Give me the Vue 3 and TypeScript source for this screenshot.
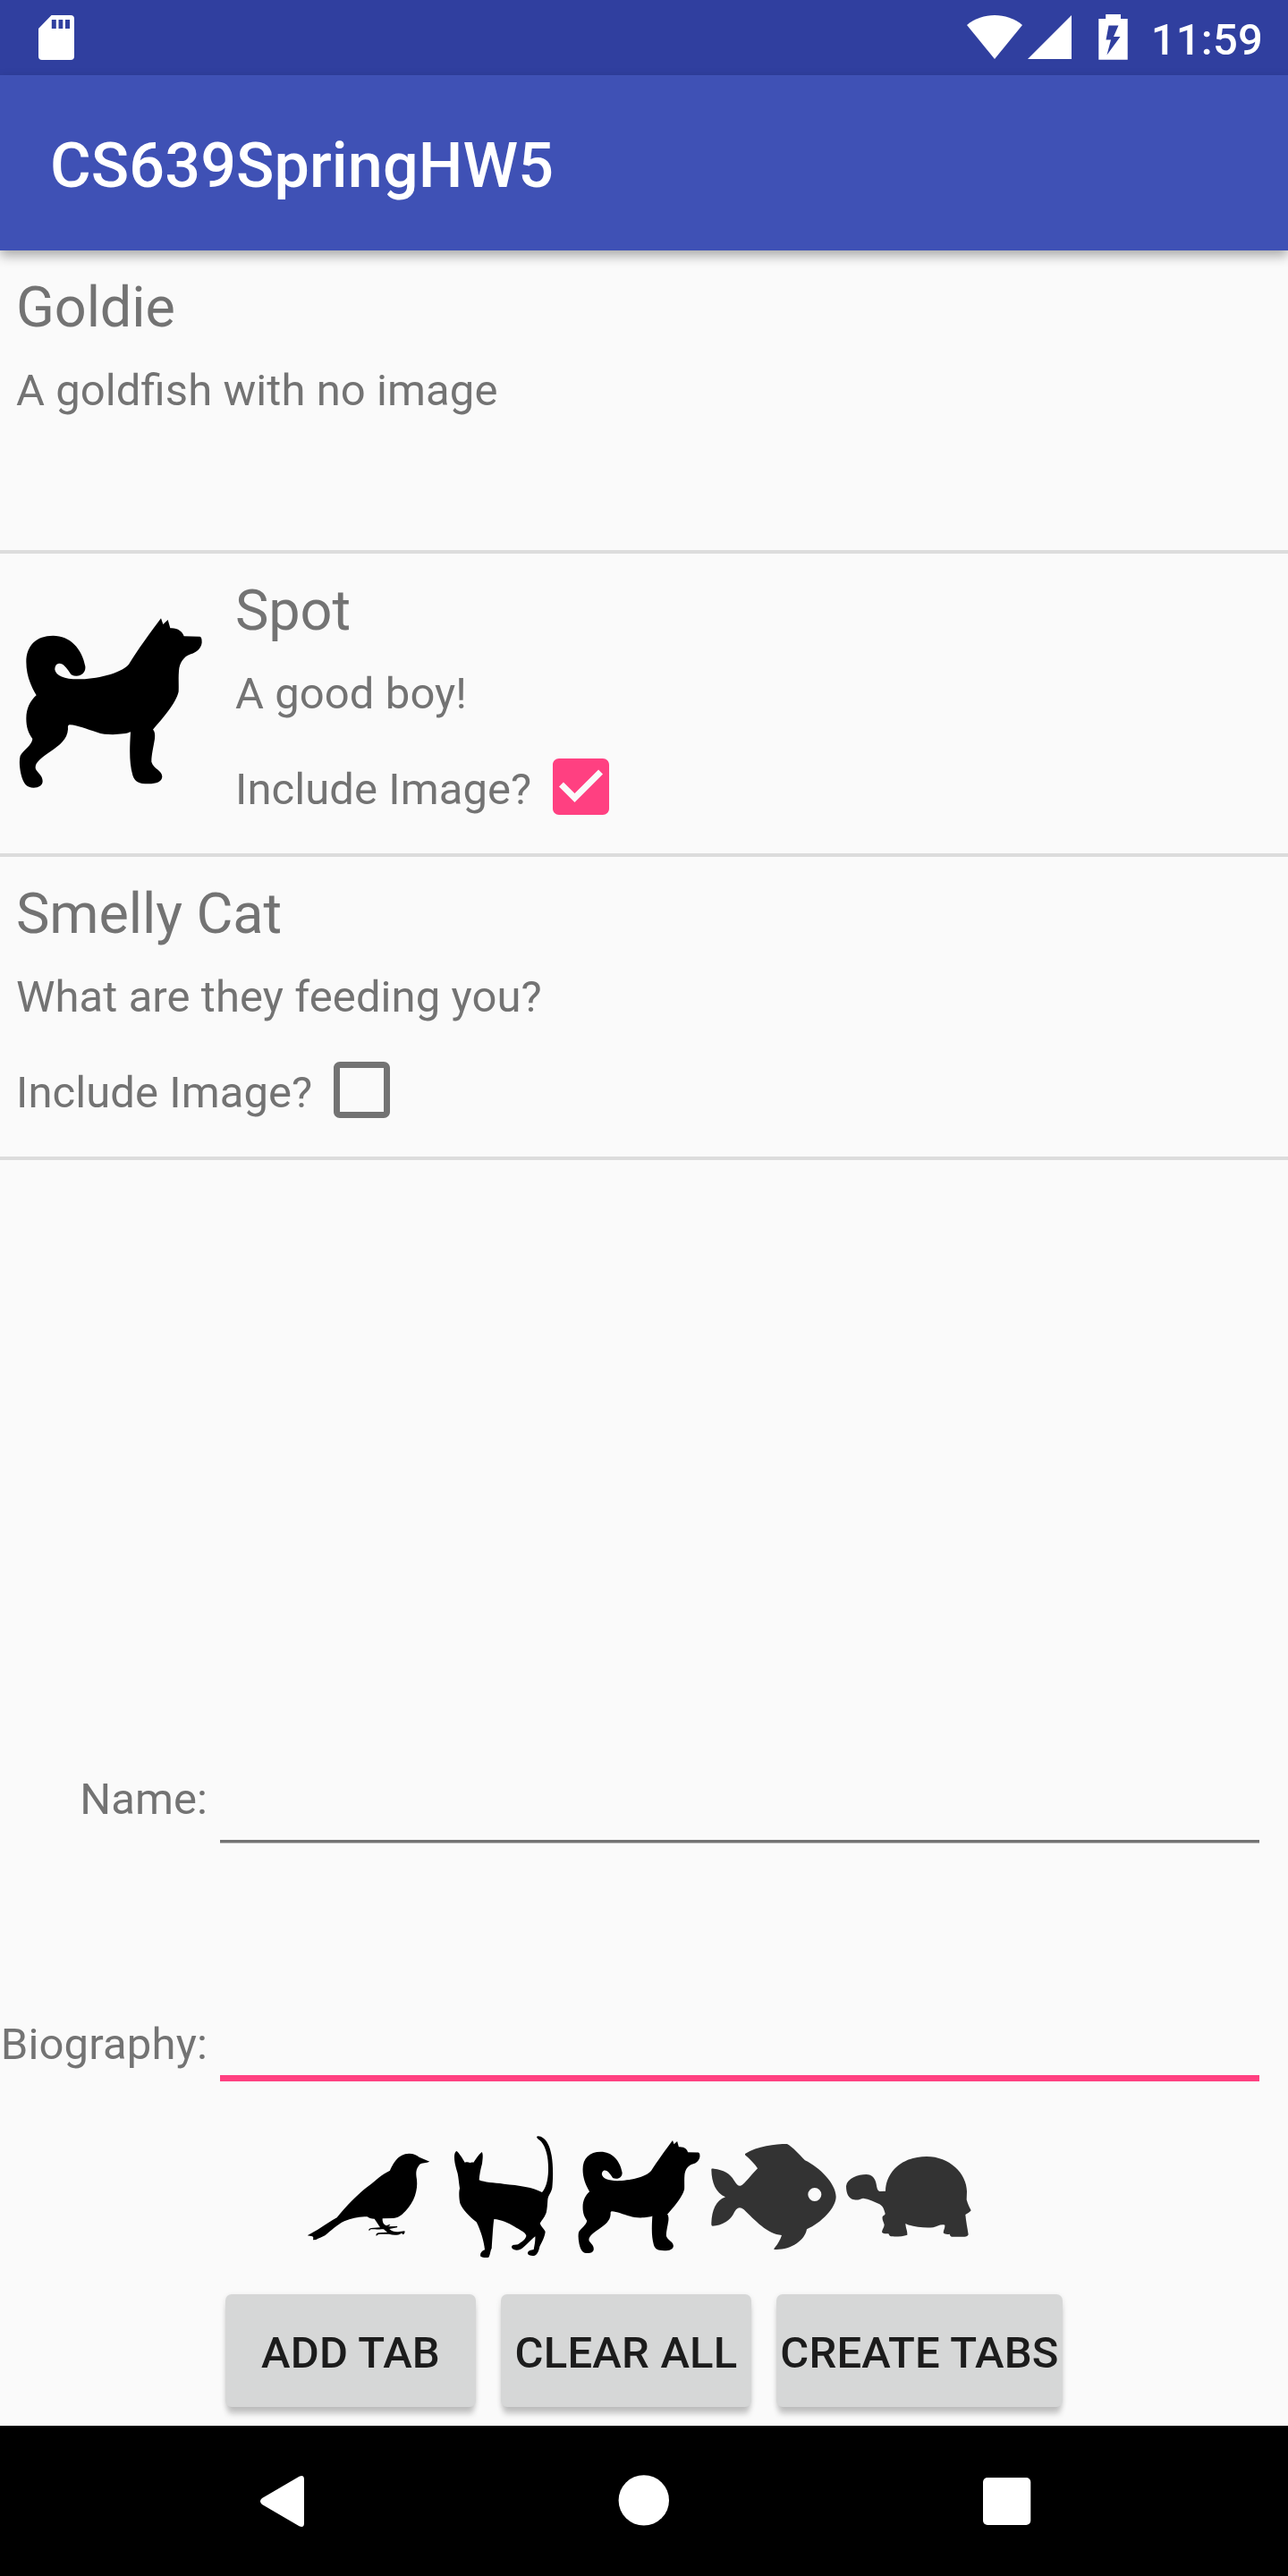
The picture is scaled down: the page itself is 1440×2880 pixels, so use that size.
<script setup lang="ts">
import { ref } from 'vue'

interface Pet {
  name: string
  bio: string
  hasImage: boolean
  included: boolean
}

interface Animal {
  id: string
  viewBox: string
  path: string
  soft?: boolean
}

const DOG =
  'M122 322C100 285 88 250 88 210C88 155 122 122 178 122C235 122 275 165 286 225C288 243 276 257 256 257C244 257 238 254 234 246C224 230 212 215 199 215C188 215 184 226 184 236C188 256 215 268 262 268C320 268 405 250 432 218C462 170 505 110 540 64L547 84L563 69L571 97C595 95 612 108 617 124L670 125C677 127 677 137 677 145C675 165 660 178 640 184C615 192 602 215 600 240C598 265 600 285 599 310C590 350 545 400 513 437C520 443 520 455 519 468C514 500 508 520 508 545C515 570 543 572 544 595C543 612 525 619 498 619C465 619 452 612 445 590C434 550 434 510 438 445C420 454 355 458 326 446C290 436 260 422 234 421C226 422 228 430 228 436C226 470 200 490 170 510C140 530 113 550 120 570C127 582 143 592 143 610C143 625 130 632 113 632C90 632 78 620 70 585C65 560 64 540 68 525C77 507 107 490 109 468C95 448 88 430 88 400C88 365 102 340 122 322Z'
const DOG_BOX = '54 33 630 630'

const animals: Animal[] = [
  {
    id: 'bird',
    viewBox: '36 48 420 420',
    path: 'M41 388C70 374 105 348 140 328C170 290 215 245 245 223C270 203 292 182 318 170C328 148 345 113 382 113C398 113 408 118 416 125L451 140C440 145 425 144 418 149C405 165 404 175 408 200C412 235 400 275 370 306C355 322 345 329 328 330L293 331C292 345 298 352 306 355L316 351L319 353L312 358L343 357L342 361L316 366C325 374 335 377 350 375L367 373C369 377 367 382 362 385L357 380C345 388 330 388 315 383C303 384 290 382 280 384C275 385 275 389 272 389C270 384 273 381 279 379L309 377C303 373 300 369 296 367C285 368 265 367 254 367C250 368 251 372 248 372C245 368 249 364 255 363L285 361C278 350 272 341 266 332C255 332 247 329 242 325C215 323 190 330 165 340C140 352 120 372 100 388C90 394 78 397 70 402L60 403L61 395L58 391Z',
  },
  {
    id: 'cat',
    viewBox: '489 48 420 420',
    path: 'M542 105C550 112 562 130 569 143C575 141 581 141 586 144C590 142 594 142 598 143C606 132 615 116 626 108C631 113 629 130 627 147C622 165 618 185 617 202C635 210 665 211 700 215C750 220 800 226 828 243C840 230 848 205 849 170C850 130 843 95 825 73C818 67 812 63 810 58C812 53 818 55 824 56C845 66 855 90 860 120C866 155 865 200 862 228C859 245 848 254 847 268C846 285 845 300 842 312C836 328 826 338 821 347C824 358 835 365 839 375C837 395 826 412 820 425C817 440 813 450 804 455C795 457 786 456 781 451C778 445 782 438 790 437L800 435C803 420 806 405 805 391C792 402 780 415 768 425C760 433 752 437 742 437C733 436 726 433 726 426C727 418 740 420 747 418C760 410 775 400 775 388C770 375 750 368 735 358C715 345 690 335 667 333C664 350 662 390 659 432C655 435 655 452 649 461C640 463 628 462 622 458C619 450 624 440 636 436C634 410 622 370 608 343C585 325 560 300 553 280C549 260 549 240 552 230C549 210 548 195 545 180C539 160 533 140 534 120C535 110 539 105 542 105Z',
  },
  { id: 'dog', viewBox: DOG_BOX, path: DOG },
  {
    id: 'fish',
    viewBox: '525 48 420 420',
    soft: true,
    path: 'M639 114C680 88 740 81 780 81C800 92 820 115 840 136C890 160 944 215 944 258C944 295 895 345 846 367C840 405 790 438 738 435C735 434 735 432 739 428C750 415 757 402 762 387C715 385 670 335 635 301C625 293 617 292 609 301C600 312 597 330 575 342C560 351 545 356 530 356C525 355 526 350 526 345C528 305 540 270 573 259C540 245 527 210 526 168C526 163 528 163 535 164C565 167 590 180 602 203C612 219 620 227 631 217C645 205 660 185 681 163C672 148 655 132 639 118ZM850 250.5a22.5 22.5 0 1 0 45 0a22.5 22.5 0 1 0 -45 0Z',
  },
  {
    id: 'turtle',
    viewBox: '48 48 420 420',
    soft: true,
    path: 'M180 239C182 170 240 123 318 123C395 123 452 180 453 240L452 268C456 282 462 295 467 304C462 311 454 314 448 318C450 340 455 365 458 385C456 390 452 392 445 392L402 392C397 391 397 387 395 383C388 385 378 384 374 379C374 370 380 365 379 353C365 349 352 358 340 361C310 363 270 360 247 348C248 365 254 372 253 386C240 391 215 392 198 391C193 390 192 385 190 382C182 382 172 382 168 377C168 368 176 362 176 352C173 340 168 335 170 325C173 320 178 320 179 315C175 300 172 290 160 283C145 275 125 266 105 263C95 265 88 271 75 268C55 265 48 245 48 222C52 195 88 183 115 183C135 183 146 197 149 215C151 228 153 237 160 240Z',
  },
]

const pets = ref<Pet[]>([
  { name: 'Goldie', bio: 'A goldfish with no image', hasImage: false, included: false },
  { name: 'Spot', bio: 'A good boy!', hasImage: true, included: true },
  { name: 'Smelly Cat', bio: 'What are they feeding you?', hasImage: true, included: false },
])

const name = ref('')
const biography = ref('')

function addTab() {
  if (!name.value) return
  pets.value.push({ name: name.value, bio: biography.value, hasImage: false, included: false })
  name.value = ''
  biography.value = ''
}

function clearAll() {
  pets.value = []
}
</script>

<template>
  <div class="screen">
    <div class="status-bar">
      <svg class="sd" width="40" height="50" viewBox="0 0 40 50">
        <path
          fill="#fff"
          fill-rule="evenodd"
          d="M14.5 0H36a4 4 0 0 1 4 4V46a4 4 0 0 1-4 4H4a4 4 0 0 1-4-4V15ZM14.8 5V15H19.8V5ZM22.5 5V15H27.3V5ZM30 5V15H35V5Z"
        />
      </svg>
      <div class="status-right">
        <svg class="wifi" width="62" height="49" viewBox="0 0 62 49">
          <path fill="#fff" d="M31 49L0 11C9 3.500 20 0 31 0C42 0 53 3.500 62 11Z" />
        </svg>
        <svg class="signal" width="49" height="49" viewBox="0 0 49 49">
          <path fill="#fff" d="M49 0V49H0Z" />
        </svg>
        <svg class="battery" width="33" height="51" viewBox="0 0 33 51">
          <path
            fill="#fff"
            fill-rule="evenodd"
            d="M8.200 0H25V5H32.700V50.700H.3V5H8.200ZM11.500 12.500L8.500 28.500H14L9.500 45.500L24.500 25H17L22.500 12.500Z"
          />
        </svg>
        <span class="clock">11:59</span>
      </div>
    </div>

    <header class="app-bar"><h1>CS639SpringHW5</h1></header>

    <main class="content">
      <ul class="pets">
        <li v-for="pet in pets" :key="pet.name" class="pet">
          <svg v-if="pet.included" class="photo" :viewBox="DOG_BOX"><path :d="DOG" /></svg>
          <div class="info">
            <div class="name">{{ pet.name }}</div>
            <div class="bio">{{ pet.bio }}</div>
            <div v-if="pet.hasImage" class="include" @click="pet.included = !pet.included">
              <span class="include-label">Include Image?</span>
              <svg class="checkbox" viewBox="3 3 18 18">
                <path
                  v-if="pet.included"
                  fill="#ff4081"
                  fill-rule="evenodd"
                  d="M19 3H5c-1.110 0-2 .9-2 2v14c0 1.100.89 2 2 2h14c1.110 0 2-.9 2-2V5c0-1.100-.89-2-2-2zM10 17l-5-5 1.410-1.410L10 14.170l7.590-7.590L19 8l-9 9z"
                />
                <path
                  v-else
                  fill="#737373"
                  d="M19 5v14H5V5h14m0-2H5c-1.100 0-2 .9-2 2v14c0 1.100.9 2 2 2h14c1.100 0 2-.9 2-2V5c0-1.100-.9-2-2-2z"
                />
              </svg>
            </div>
          </div>
        </li>
      </ul>

      <form class="form" @submit.prevent="addTab">
        <label class="label" for="pet-name">Name:</label>
        <input id="pet-name" v-model="name" class="field" type="text" autocomplete="off" />
        <label class="label bio-label" for="pet-bio">Biography:</label>
        <input id="pet-bio" v-model="biography" class="field active" type="text" autocomplete="off" />
      </form>

      <div class="animals">
        <svg
          v-for="animal in animals"
          :key="animal.id"
          class="animal"
          :class="{ soft: animal.soft }"
          :viewBox="animal.viewBox"
        >
          <path fill-rule="evenodd" :d="animal.path" />
        </svg>
      </div>

      <div class="buttons">
        <button type="button" class="btn" @click="addTab">ADD TAB</button>
        <button type="button" class="btn" @click="clearAll">CLEAR ALL</button>
        <button type="button" class="btn wide">CREATE TABS</button>
      </div>
    </main>

    <nav class="nav-bar">
      <svg class="nav-icon" viewBox="0 0 84 84">
        <path fill="#fff" d="M20 39L61.500 14.800Q67 12.500 67 18V67Q67 72.500 61.500 70.200L20 46Q16 42.500 20 39Z" />
      </svg>
      <svg class="nav-icon" viewBox="0 0 84 84"><circle cx="41.800" cy="41.400" r="28.200" fill="#fff" /></svg>
      <svg class="nav-icon" viewBox="0 0 84 84">
        <rect x="16" y="16" width="53.300" height="53" rx="5" fill="#fff" />
      </svg>
    </nav>
  </div>
</template>

<style>
body {
  margin: 0;
  background: #fafafa;
}
</style>

<style scoped>
.screen {
  width: 1440px;
  height: 2880px;
  display: flex;
  flex-direction: column;
  overflow: hidden;
  background: #fafafa;
  color: #737373;
  font-family: Roboto, 'Liberation Sans', sans-serif;
  font-size: 49px;
  font-feature-settings: 'liga' 1;
  letter-spacing: 0.07px;
}

.status-bar {
  height: 84px;
  flex: none;
  display: flex;
  justify-content: space-between;
  box-sizing: border-box;
  padding: 0 28px 0 43px;
  background: #303f9f;
}

.sd {
  margin-top: 17px;
}

.status-right {
  display: flex;
}

.wifi,
.signal {
  margin-top: 17px;
}

.signal {
  margin-left: 6px;
}

.battery {
  margin: 16px 26px 0 30px;
}

.clock {
  color: #fff;
  font-weight: 500;
  line-height: 89px;
  letter-spacing: 0.2px;
}

.app-bar {
  height: 196px;
  flex: none;
  box-sizing: border-box;
  padding-left: 56px;
  background: #3f51b5;
  box-shadow: 0 6px 12px rgba(0, 0, 0, 0.32);
  z-index: 1;
}

.app-bar h1 {
  margin: 0;
  color: #fff;
  font-size: 70px;
  font-weight: 500;
  letter-spacing: 0.12px;
  line-height: 202px;
}

.content {
  flex: 1;
  min-height: 0;
  display: flex;
  flex-direction: column;
}

.pets {
  flex: 1;
  margin: 0;
  padding: 0;
  list-style: none;
}

.pet {
  display: flex;
  align-items: center;
  height: 335px;
  padding-left: 18px;
  border-bottom: 4px solid #dcdcdc;
}

.photo {
  width: 210px;
  height: 210px;
  margin: 0 35px 1px 0;
}

.info {
  align-self: flex-start;
  padding-top: 18px;
}

.name {
  font-size: 63px;
  letter-spacing: -0.1px;
  line-height: 91px;
}

.bio {
  line-height: 96px;
}

.include {
  display: flex;
  align-items: center;
  margin-top: -2px;
}

.include-label {
  line-height: 121px;
}

.checkbox {
  width: 63px;
  height: 63px;
  margin: 0 0 6px 24px;
}

.form {
  display: grid;
  grid-template-columns: 232px 1162px;
  column-gap: 14px;
  align-items: start;
  height: 446px;
  grid-template-rows: 267px 179px;
}

.label {
  justify-self: end;
  line-height: 144px;
}

.bio-label {
  letter-spacing: 0.15px;
  line-height: 158px;
}

.field {
  height: 120px;
  box-sizing: border-box;
  padding: 0;
  border: 0;
  border-bottom: 3px solid #737373;
  border-radius: 0;
  box-shadow: 0 1px 0 #b8b8b8;
  outline: none;
  background: transparent;
  color: #212121;
  font: inherit;
}

.field.active {
  border-bottom: 7px solid #ff4081;
  box-shadow: none;
}

.animals {
  display: flex;
  justify-content: center;
  gap: 11px;
  padding-right: 12px;
}

.animal {
  width: 140px;
  height: 140px;
}

.soft {
  fill: #333;
}

.buttons {
  display: flex;
  justify-content: center;
  gap: 28px;
  padding: 39px 0 21px;
}

.btn {
  width: 280px;
  height: 126px;
  padding: 4px 0 0;
  border: 0;
  border-radius: 7px;
  background: #d6d7d7;
  box-shadow: 0 10px 6px -2px rgba(0, 0, 0, 0.19), 0 2px 6px rgba(0, 0, 0, 0.11);
  color: #1c1c1c;
  font: 500 49px Roboto, 'Liberation Sans', sans-serif;
  letter-spacing: 0.2px;
  white-space: nowrap;
}

.btn.wide {
  width: 320px;
}

.nav-bar {
  height: 168px;
  flex: none;
  display: flex;
  align-items: center;
  justify-content: space-between;
  box-sizing: border-box;
  padding: 0 273px;
  background: #000;
  z-index: 1;
}

.nav-icon {
  width: 84px;
  height: 84px;
}
</style>
